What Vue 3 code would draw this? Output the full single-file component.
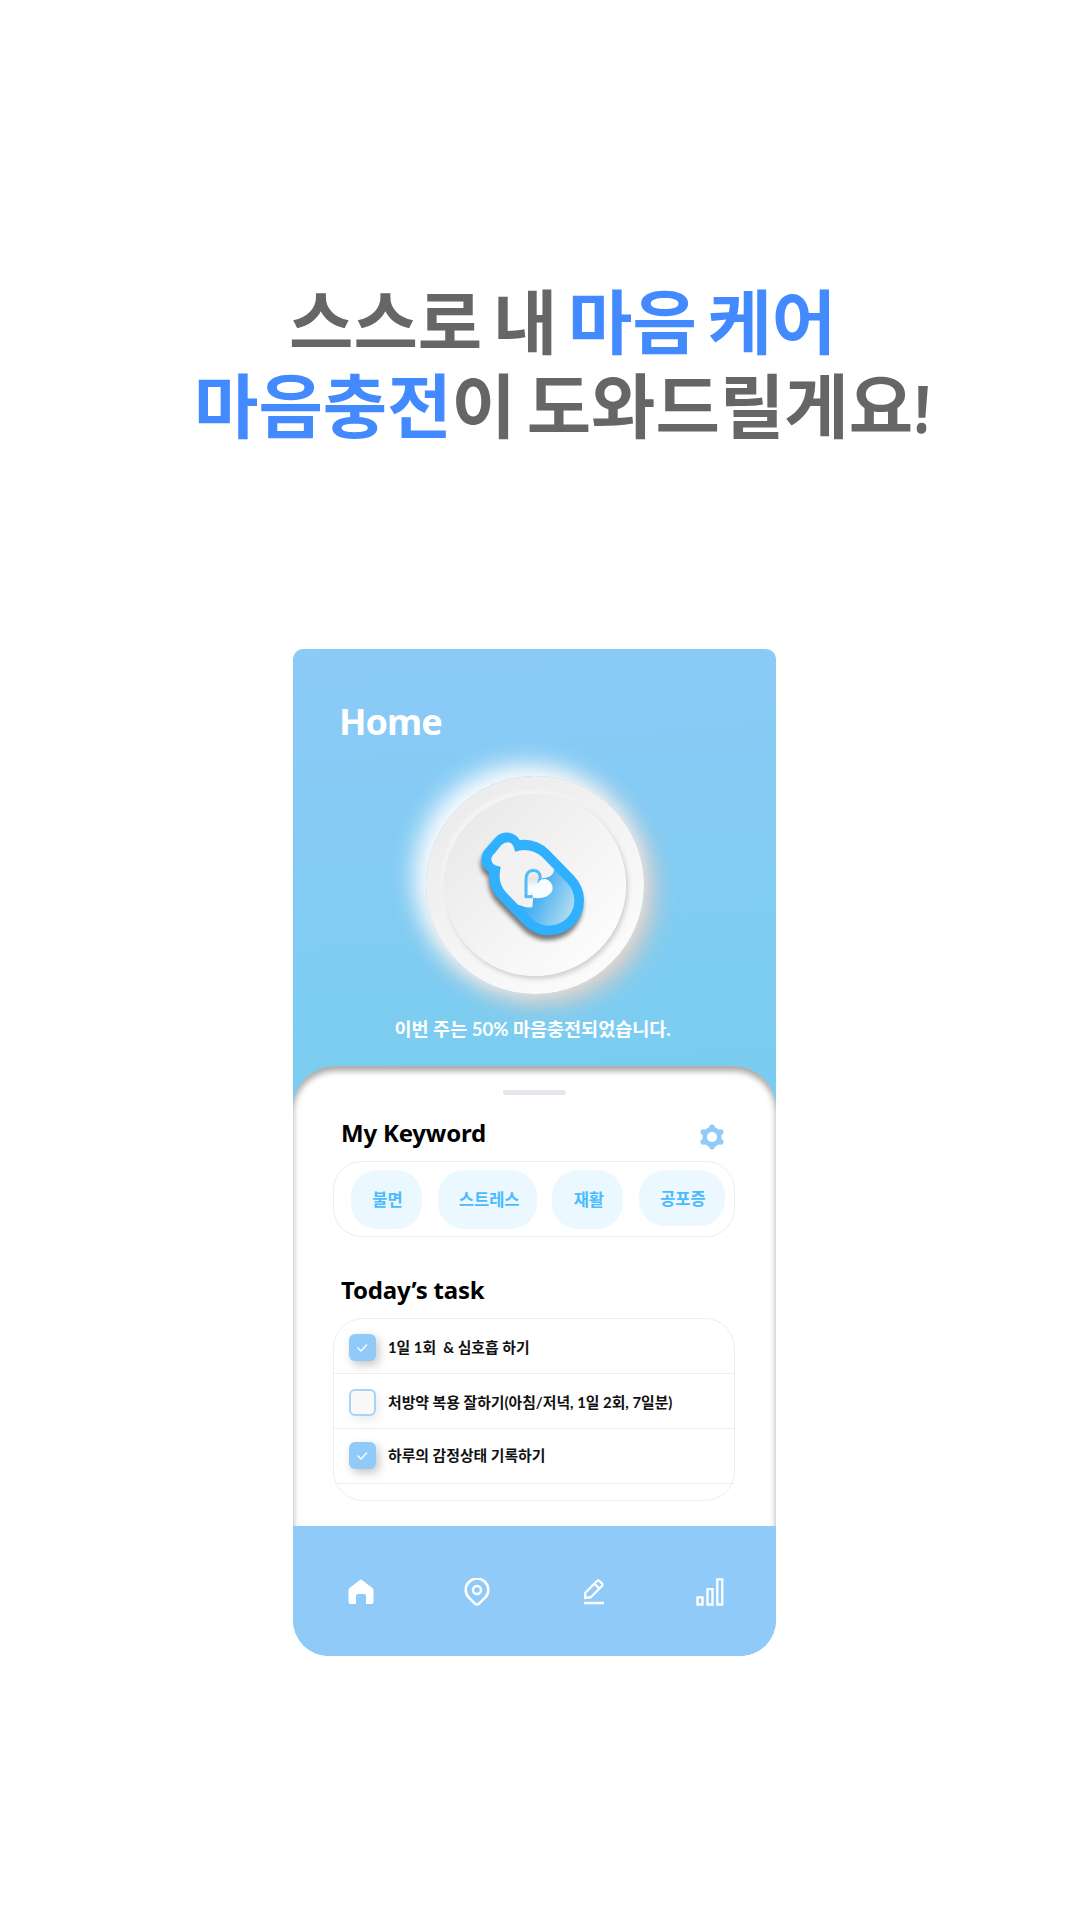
<script setup>
const keywords = [
  { text: '불면', cls: 'short' },
  { text: '스트레스', cls: 'long' },
  { text: '재활', cls: 'short' },
  { text: '공포증', cls: 'mid' },
]
const tasks = [
  { text: '1일 1회\u00a0 & 심호흡 하기', done: true },
  { text: '처방약 복용 잘하기(아침/저녁, 1일 2회, 7일분)', done: false },
  { text: '하루의 감정상태 기록하기', done: true },
]
</script>

<template>
  <main class="page">
    <h1 class="headline">
      <div class="line one">스스로 내 <em>마음 케어</em></div>
      <div class="line two"><em>마음충전</em>이 도와드릴게요<span class="bang">!</span></div>
    </h1>

    <section class="phone">
      <header class="hero">
        <h2>Home</h2>
        <div class="dial">
          <div class="inner">
            <svg class="bottle" width="150" height="150" viewBox="0 0 450 450">
              <defs>
                <linearGradient id="liquid" gradientUnits="userSpaceOnUse" x1="195" y1="250" x2="335" y2="315">
                  <stop offset="0" stop-color="#2fa9f5" />
                  <stop offset=".35" stop-color="#58b7f1" />
                  <stop offset="1" stop-color="#b5dcf1" />
                </linearGradient>
                <linearGradient id="lobe" x1="0" y1="0" x2="0" y2="1">
                  <stop offset="0" stop-color="#f2f2f2" />
                  <stop offset=".35" stop-color="#e3e6e8" />
                  <stop offset=".65" stop-color="#f7fcff" />
                </linearGradient>
                <clipPath id="cavity">
                  <path d="M138.300 247.700A76 76 0 0 1 245.700 140.300L320.700 217.300A76 76 0 0 1 213.300 324.700Z" />
                </clipPath>
              </defs>
              <g fill="none" stroke="#30b1ff" stroke-linecap="round">
                <path stroke-width="210" d="M192 194L267 271" />
                <path stroke-width="91" d="M140 113L110 147" />
              </g>
              <path d="M192 194L267 271" stroke="url(#liquid)" stroke-width="152" stroke-linecap="round" />
              <g fill="#f2f2f2">
                <g clip-path="url(#cavity)">
                  <path d="M90 90H255L283 177Q280 204 247 205L222 240L217 291Q204 296 180 286L90 280Z" />
                </g>
                <path d="M124 105Q141 91 155 101Q162 107 164 122L190 150L145 190L118 169Q98 168 94 150Q93 139 105 129Z" />
              </g>
              <path d="M198 260V207Q199 183 219 181Q240 182 241 203L236 222" fill="url(#lobe)" stroke="#52bbfa" stroke-width="9" />
              <path d="M218 260L219 245L205 256V232L234 220Q240 206 257 207Q278 214 278 235Q278 250 258 260Q238 267 218 263Z" fill="#f7fcff" />
              <path d="M194 260H218" stroke="#52bbfa" stroke-width="9" />
            </svg>
          </div>
        </div>
        <p class="caption">이번 주는 50% 마음충전되었습니다.</p>
      </header>

      <div class="sheet">
        <div class="handle"></div>
        <div class="title-row">
          <h3>My Keyword</h3>
          <svg class="gear" width="24" height="26" viewBox="0 0 24 26">
            <g fill="none" stroke="#90caf9" stroke-linejoin="round">
              <path stroke-width="5" d="M12 4.500L19 8.700V17.300L12 21.500L5 17.300V8.700Z" />
              <path stroke-width="5.500" stroke-linecap="round" d="M12 3.200V4M20.700 8H20.800M20.700 18H20.800M12 22.500V22.800M3.200 18H3.300M3.200 8H3.300" />
              <circle cx="12" cy="13" r="7" stroke-width="4" />
            </g>
            <circle cx="12" cy="13" r="5" fill="#fff" />
          </svg>
        </div>
        <div class="keywords">
          <span v-for="k in keywords" :key="k.text" class="chip" :class="k.cls">{{ k.text }}</span>
        </div>
        <h3 class="task-title">Today’s task</h3>
        <ul class="tasks">
          <li v-for="t in tasks" :key="t.text">
            <span class="check" :class="{ done: t.done }">
              <svg v-if="t.done" width="27" height="27" viewBox="0 0 27 27">
                <path d="M8.500 13.500L12 17L18 10.500" fill="none" stroke="#fff" stroke-width="1.300" />
              </svg>
            </span>
            <span class="label">{{ t.text }}</span>
          </li>
        </ul>
      </div>

      <nav class="tabs">
        <svg width="28" height="28" viewBox="0 0 28 28">
          <path fill="#fff" d="M14 1.300L25.500 10Q26.500 10.800 26.500 12V24Q26.500 26 24.500 26H19V18Q19 16 17 16H11Q9 16 9 18V26H3.500Q1.500 26 1.500 24V12Q1.500 10.800 2.500 10Z" />
        </svg>
        <svg width="28" height="28" viewBox="0 0 28 28" fill="none" stroke="#fff" stroke-width="2.500">
          <path d="M5.700 19.500A11.300 11.300 0 1 1 22.300 19.500L16 25.700Q14 27.300 12 25.700Z" />
          <circle cx="14" cy="12" r="4" />
        </svg>
        <svg width="28" height="28" viewBox="0 0 28 28" fill="none" stroke="#fff" stroke-width="2.300">
          <path d="M4 25H24" stroke-width="2.600" />
          <path d="M5.200 20V15L17 3Q18.200 1.800 19.400 3L22 5.600Q23.200 6.800 22 8L10.500 19.500ZM5 19.500H11M14.500 5.800L19.500 10.800" />
        </svg>
        <svg width="28" height="28" viewBox="0 0 28 28" fill="none" stroke="#fff" stroke-width="2.300">
          <path d="M1.500 19.300H6.500V26.500H1.500ZM11.500 11.200H16.500V26.500H11.500ZM21.300 1.300H26.300V26.500H21.300Z" />
        </svg>
      </nav>
    </section>
  </main>
</template>

<style>
body { background: #fff; }
</style>

<style scoped>
* { box-sizing: border-box; margin: 0; padding: 0; }
.page {
  width: 1080px;
  height: 1920px;
  background: #fff;
  display: flex;
  flex-direction: column;
  font-family: "Noto Sans CJK KR", sans-serif;
  overflow: hidden;
}
.headline { padding-top: 277px; height: 649px; color: #666; font-size: 70px; font-weight: 700; word-spacing: -5.200px; }
.line { height: 84px; line-height: 84px; white-space: nowrap; }
.one { padding-left: 289px; }
.two { padding-left: 194px; }
.headline em { font-style: normal; color: #448aff; }
.bang {
  display: inline-block;
  font: 700 66px/84px "Noto Sans", sans-serif;
  transform: skewX(-2deg) scaleX(.85);
  margin-left: 0;
}
.phone {
  width: 483px;
  height: 1007px;
  margin-left: 293px;
  flex: none;
  display: flex;
  flex-direction: column;
  border-radius: 10px 10px 36px 36px;
  overflow: hidden;
  background: linear-gradient(175deg, #8ccaf7 0, #7acdf0 42%, #7acdf0 100%);
}
.hero { flex: none; height: 417px; display: flex; flex-direction: column; }
h2 {
  margin: 48px 0 0 46px;
  height: 50px;
  font: 700 36px/50px "Noto Sans", sans-serif;
  letter-spacing: -1px;
  color: #fff;
}
.dial {
  flex: none;
  width: 218px;
  height: 218px;
  margin: 29px 0 0 132.500px;
  border-radius: 50%;
  background: linear-gradient(145deg, #ebebeb 10%, #fcfcfc 90%);
  box-shadow: -9px -9px 24px 3px rgba(255, 255, 255, .95), 8px 8px 26px 1px rgba(255, 205, 180, .8);
  display: flex;
  align-items: center;
  justify-content: center;
}
.inner {
  width: 182px;
  height: 182px;
  border-radius: 50%;
  background: linear-gradient(135deg, #e9e9e9 10%, #fdfdfd 90%);
  box-shadow: 2px 3px 5px rgba(0, 0, 0, .17), -2px -3px 5px rgba(255, 255, 255, .55);
  display: flex;
  align-items: center;
  justify-content: center;
}
.bottle { filter: drop-shadow(-1px 5px 2px rgba(0, 0, 0, .5)); }
.caption {
  height: 30px;
  margin: 20px 0 0 101.500px;
  font: 700 18.550px/30px Lato, "Noto Sans CJK KR", sans-serif;
  color: #fff;
  white-space: nowrap;
}
.sheet {
  height: 460px;
  border-radius: 42px 42px 0 0;
  background: #fff;
  box-shadow: inset 0 5px 6px rgba(0, 0, 0, .35);
  padding: 24px 40px 0;
  display: flex;
  flex-direction: column;
}
.handle { flex: none; width: 63px; height: 5px; border-radius: 3px; background: #e5e6eb; margin-left: 170px; }
.title-row { flex: none; display: flex; justify-content: space-between; height: 66px; padding: 21px 12px 0 8px; }
h3 { font: 700 24px/34px "Noto Sans", sans-serif; letter-spacing: -.2px; color: #000; white-space: nowrap; }
.gear { margin-top: 8px; }
.keywords {
  flex: none;
  width: 402px;
  height: 76px;
  border: 1px solid #ececec;
  border-radius: 29px;
  display: flex;
  align-items: flex-start;
  padding: 8px 9px 0 17px;
  justify-content: space-between;
}
.chip {
  height: 59px;
  border-radius: 26px;
  background: #ebf8ff;
  color: #4abbfd;
  font-size: 16.500px;
  font-weight: 700;
  line-height: 59px;
  text-align: center;
  padding-left: 2px;
}
.short { width: 71px; }
.long { width: 99px; padding-left: 4px; }
.mid { width: 86px; height: 56px; line-height: 56px; }
.task-title { flex: none; margin: 36px 0 0 8px; height: 45px; }
.tasks {
  flex: none;
  list-style: none;
  width: 402px;
  height: 183px;
  border: 1.500px solid #eee;
  border-radius: 30px;
}
.tasks li { height: 55px; border-bottom: 1.500px solid #eee; display: flex; align-items: center; padding: 2px 0 0 15px; }
.tasks li:last-child { padding: 0 0 2px 15px; }
.check {
  width: 27px;
  height: 27px;
  border-radius: 6px;
  border: 2px solid #aad4f6;
  background: #f9f9f9;
  box-shadow: 3px 4px 10px rgba(0, 0, 0, .08);
}
.check.done { border: 0; background: #90caf9; box-shadow: 3px 4px 10px rgba(0, 0, 0, .22); }
.check svg { display: block; }
.label {
  margin-left: 12px;
  font: 700 14.850px/24px Lato, "Noto Sans CJK KR", sans-serif;
  color: #111;
  white-space: nowrap;
}
.tabs {
  height: 130px;
  background: #90caf9;
  display: flex;
  justify-content: space-between;
  padding: 52px 52px 0 54px;
}
</style>
